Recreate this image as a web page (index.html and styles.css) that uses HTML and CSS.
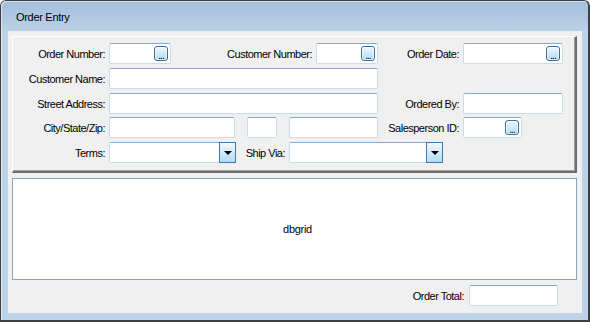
FILE: index.html
```html
<!DOCTYPE html>
<html>
<head>
<meta charset="utf-8">
<link rel="stylesheet" href="styles.css">
</head>
<body>
<div class="window">
  <div class="titlebar"><span class="title">Order Entry</span></div>
  <div class="client">
    <div class="panel">
      <div class="row">
        <span class="lbl w96">Order Number:</span>
        <div class="edit w62"><span class="ellipsis">...</span></div>
        <span class="lbl w145">Customer Number:</span>
        <div class="edit w62"><span class="ellipsis">...</span></div>
        <span class="lbl w85">Order Date:</span>
        <div class="edit w100"><span class="ellipsis">...</span></div>
      </div>
      <div class="row">
        <span class="lbl w96">Customer Name:</span>
        <div class="edit w269"></div>
      </div>
      <div class="row">
        <span class="lbl w96">Street Address:</span>
        <div class="edit w269"></div>
        <span class="lbl w85">Ordered By:</span>
        <div class="edit w100"></div>
      </div>
      <div class="row row-tight">
        <span class="lbl w96">City/State/Zip:</span>
        <div class="edit w126"></div>
        <div class="edit w30 gap12"></div>
        <div class="edit w89 gap12"></div>
        <span class="lbl w85">Salesperson ID:</span>
        <div class="edit w59"><span class="ellipsis">...</span></div>
      </div>
      <div class="row">
        <span class="lbl w96">Terms:</span>
        <div class="combo w127"><span class="drop"><span class="tri"></span></span></div>
        <span class="lbl w53">Ship Via:</span>
        <div class="combo w154"><span class="drop"><span class="tri"></span></span></div>
      </div>
    </div>
    <div class="grid"><span class="grid-text">dbgrid</span></div>
    <div class="total-row">
      <span class="total-lbl">Order Total:</span>
      <div class="edit w89"></div>
    </div>
  </div>
</div>
</body>
</html>
```

FILE: styles.css
```css
html, body {
  margin: 0;
  padding: 0;
  background: #ffffff;
}

body {
  font-family: "Liberation Sans", Arial, sans-serif;
  font-size: 11px;
  color: #000;
}

.window {
  box-sizing: border-box;
  width: 590px;
  height: 322px;
  border-style: solid;
  border-color: #3f3f3f;
  border-width: 1px 2px 2px 1px;
  border-radius: 6px 6px 0 0;
  background: #bdd3ea;
  box-shadow: inset 1px 1px 0 rgba(255, 255, 255, 0.55);
  display: flex;
  flex-direction: column;
  overflow: hidden;
}

.titlebar {
  height: 30px;
  flex: none;
  display: flex;
  align-items: center;
  padding-left: 15px;
  background: linear-gradient(#a3bddb, #bbd1e9);
  box-shadow: inset 1px 1px 0 rgba(255, 255, 255, 0.5);
  border-radius: 5px 5px 0 0;
}

.title {
  letter-spacing: -0.3px;
  padding-top: 2px;
}

.client {
  width: 574px;
  height: 282px;
  margin-left: 7px;
  box-sizing: border-box;
  background: #f0f0f0;
  padding: 5px 5px 0 4px;
  display: flex;
  flex-direction: column;
}

.panel {
  box-sizing: border-box;
  width: 565px;
  height: 137px;
  border-top: 1px solid #ffffff;
  border-left: 1px solid #ffffff;
  border-right: 2px solid #6e6e6e;
  border-bottom: 2px solid #6e6e6e;
  box-shadow: inset -1px -1px 0 #a0a0a0;
  padding-top: 6px;
  display: flex;
  flex-direction: column;
  gap: 4px;
}

.row {
  display: flex;
  align-items: center;
  height: 21px;
}

.row-tight {
  margin-top: -1px;
}

.lbl {
  box-sizing: border-box;
  text-align: right;
  padding-right: 4px;
  letter-spacing: -0.5px;
  white-space: nowrap;
  flex: none;
}

.w96 { width: 96px; }
.w145 { width: 145px; }
.w85 { width: 85px; }
.w53 { width: 53px; }

.edit, .combo {
  box-sizing: border-box;
  height: 21px;
  background: #ffffff;
  border: 1px solid #c6ddf1;
  border-top-color: #86aad2;
  border-radius: 2px;
  flex: none;
  display: flex;
  align-items: center;
  justify-content: flex-end;
  padding-right: 2px;
}

.combo {
  padding-right: 0;
  align-items: stretch;
}

.w62 { width: 62px; }
.w100 { width: 100px; }
.w269 { width: 269px; }
.w126 { width: 126px; }
.w30 { width: 30px; }
.w89 { width: 89px; }
.w59 { width: 59px; }
.w127 { width: 127px; }
.w154 { width: 154px; }

.gap12 { margin-left: 12px; }

.ellipsis {
  box-sizing: border-box;
  width: 14px;
  height: 15px;
  border: 1px solid #3d6f9e;
  border-radius: 3px;
  background: linear-gradient(#eef8fe, #b3ddf5);
  box-shadow: inset 0 0 0 1px rgba(255, 255, 255, 0.6);
  font-size: 10px;
  line-height: 17px;
  text-align: center;
  letter-spacing: -1px;
  color: #000;
  overflow: hidden;
}

.drop {
  box-sizing: border-box;
  width: 17px;
  margin: -1px -1px -1px auto;
  border: 1px solid #3d7bad;
  background: linear-gradient(#f2f9fe, #b2dcf4);
  display: flex;
  align-items: center;
  justify-content: center;
}

.tri {
  width: 0;
  height: 0;
  border-left: 4px solid transparent;
  border-right: 4px solid transparent;
  border-top: 4px solid #000;
  margin-top: 1px;
}

.grid {
  box-sizing: border-box;
  width: 565px;
  height: 102px;
  margin-top: 5px;
  border: 1px solid #84a5bf;
  background: #ffffff;
  display: flex;
  align-items: center;
  justify-content: center;
}

.grid-text {
  letter-spacing: -0.3px;
  padding-left: 6px;
}

.total-row {
  display: flex;
  align-items: center;
  justify-content: flex-end;
  height: 21px;
  margin-top: 5px;
  padding-right: 19px;
}

.total-lbl {
  letter-spacing: -0.5px;
  margin-right: 5px;
}
```
